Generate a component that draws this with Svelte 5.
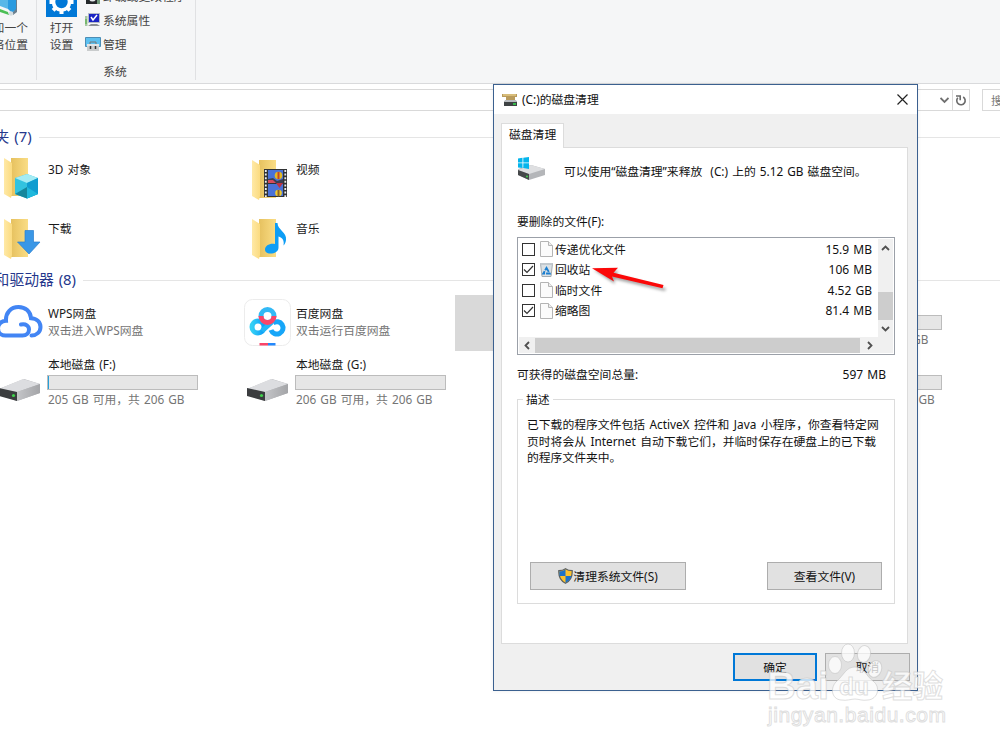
<script lang="ts">
  type Tile = {
    icon?: string;
    name?: string;
    sub?: string;
    fill?: number;
    bar?: boolean;
    selected?: boolean;
  };

  const folders: Tile[] = [
    { icon: 'cube', name: '3D 对象' },
    { icon: 'video', name: '视频' },
    { icon: 'download', name: '下载' },
    { icon: 'music', name: '音乐' }
  ];

  const drives: Tile[] = [
    { icon: 'wps', name: 'WPS网盘', sub: '双击进入WPS网盘' },
    { icon: 'baidu', name: '百度网盘', sub: '双击运行百度网盘' },
    { selected: true },
    { bar: true, fill: 0, sub: '107 GB 可用，共 118 GB' },
    { icon: 'drive', bar: true, fill: 1, name: '本地磁盘 (F:)', sub: '205 GB 可用，共 206 GB' },
    { icon: 'drive', bar: true, fill: 0, name: '本地磁盘 (G:)', sub: '206 GB 可用，共 206 GB' },
    {},
    { bar: true, fill: 0, sub: '95.8 GB 可用，共 99.9 GB' }
  ];

  const files = [
    { label: '传递优化文件', size: '15.9 MB', checked: false },
    { label: '回收站', size: '106 MB', checked: true, bin: true },
    { label: '临时文件', size: '4.52 GB', checked: false },
    { label: '缩略图', size: '81.4 MB', checked: true }
  ];
</script>

{#snippet folder()}
  <path d="M11 1h17v38H11z" fill="url(#folderBack)" />
  <path d="M4 1l8 5v31l-1 4-7-4z" fill="url(#folderFront)" />
{/snippet}

{#snippet drive()}
  <path d="M0 22L25 12l16 5v9L18 34 0 28z" fill="#b3b4b7" />
  <path d="M0 22L24 12l17 5-23 8z" fill="#dcdde0" />
  <path d="M0 21l18 4v9L0 29z" fill="#3b3d3f" />
  <path d="M18 25l23-8v9l-23 8z" fill="url(#driveSide)" />
  <circle cx="14.5" cy="28.5" r="1.6" fill="#3fd24b" />
{/snippet}

<svg class="defs" width="0" height="0">
  <defs>
    <linearGradient id="folderBack" x1="0" x2="1">
      <stop offset="0" stop-color="#e6c15f" />
      <stop offset="1" stop-color="#fadd85" />
    </linearGradient>
    <linearGradient id="folderFront" x1="0" x2="1">
      <stop offset="0" stop-color="#ffe9a6" />
      <stop offset="1" stop-color="#fbdb80" />
    </linearGradient>
    <linearGradient id="driveSide" x1="0" x2="1">
      <stop offset="0" stop-color="#c4c5c8" />
      <stop offset="1" stop-color="#a4a5a8" />
    </linearGradient>
    <linearGradient id="cloudBlue" x1="0" x2="1">
      <stop offset="0" stop-color="#35d0f5" />
      <stop offset="1" stop-color="#0a9cf8" />
    </linearGradient>
  </defs>
</svg>

<div class="screen">
  <div class="ribbon">
    <div class="ribbon-group location">
      <svg width="30" height="19" viewBox="0 0 30 19">
        <path d="M0 0h8v9L0 6z" fill="#58b7e8" />
        <path d="M8 0l8-1v11l-4 3-4-4z" fill="#2a9be0" />
        <path d="M16 0h1v12l-4 3v-3l3-3z" fill="#6b7f8e" />
        <path d="M0 9l8 3 1 3-9-3z" fill="#4bbf55" />
        <circle cx="11" cy="13.500" r="2.200" fill="#d5dde0" />
      </svg>
      <span>添加一个</span>
      <span>网络位置</span>
    </div>
    <div class="ribbon-group system">
      <div class="ribbon-cols">
        <div class="settings">
          <svg width="31" height="17" viewBox="0 0 31 17">
            <path d="M0 0h31v17H0z" fill="#0078d7" />
            <circle cx="15.500" cy="2" r="8" fill="none" stroke="#fff" stroke-width="3.600" />
            <path d="M15.500 10v4M9.800 7.700l-2.700 2.700M21.200 7.700l2.700 2.700M7.500 2h-4M23.500 2h4" stroke="#fff" stroke-width="4" />
          </svg>
          <span>打开</span>
          <span>设置</span>
        </div>
        <div class="commands">
          <div class="command">
            <svg width="16" height="16" viewBox="0 0 16 16">
              <path d="M1 3h13v13H1z" fill="#25292b" />
              <circle cx="7.500" cy="10" r="3.500" fill="#e8ecee" />
              <path d="M12 12l3-4v8h-3z" fill="#739b7b" />
            </svg>
            <span>卸载或更改程序</span>
          </div>
          <div class="command">
            <svg width="16" height="16" viewBox="0 0 16 16">
              <path d="M0 4h2.500v10H0z" fill="#a6c7a2" />
              <path d="M1 7v5" stroke="#49a83d" />
              <path d="M3.500 1.500h11v9h-11z" fill="#1a24c4" stroke="#b3bac6" />
              <path d="M6 5l2 3 4-5" fill="none" stroke="#fff" stroke-width="1.500" />
              <path d="M6 12h6l3 2H3z" fill="#8a8f93" />
            </svg>
            <span>系统属性</span>
          </div>
          <div class="command">
            <svg width="16" height="16" viewBox="0 0 16 16">
              <path d="M.5 1.500h15v9H.5z" fill="#5bc0f0" stroke="#4c8db5" />
              <path d="M5 8V6h6v2" fill="none" stroke="#777" />
              <path d="M2 8h12v7H2z" fill="#c9cccd" />
              <path d="M2 8h12v2H2z" fill="#e2e4e5" />
              <path d="M5.500 10v3M10.500 10v3" stroke="#333" stroke-width="1.500" />
            </svg>
            <span>管理</span>
          </div>
        </div>
      </div>
      <div class="group-label">系统</div>
    </div>
  </div>

  <div class="address-row">
    <div class="address">
      <div class="history">
        <svg width="9" height="7" viewBox="0 0 9 7"><path d="M.5 1l4 4 4-4" fill="none" stroke="#707070" stroke-width="1.800" /></svg>
      </div>
      <div class="refresh">
        <svg width="12" height="13" viewBox="0 0 12 13">
          <path d="M8.200 3a4.200 4.200 0 1 1-5.400.8" fill="none" stroke="#6a6a6a" stroke-width="1.600" />
          <path d="M1 2h4.200v4.200" fill="none" stroke="#6a6a6a" stroke-width="1.600" />
        </svg>
      </div>
    </div>
    <div class="search">搜索</div>
  </div>

  <div class="section-title first"><span>文件夹 (7)</span></div>
  <div class="tiles folders">
    {#each folders as tile}
      <div class="tile">
        <div class="tile-icon">
          <svg class:low={tile.icon !== 'cube'} width="45" height="45" viewBox="0 0 45 45">
            {@render folder()}
            {#if tile.icon === 'cube'}
              <path d="M15 21l12-4 11 4v16l-11 4.500L15 37z" fill="#32c3df" />
              <path d="M15 21l12-4 11 4-11 5z" fill="#a5ecf4" />
              <path d="M27 26l11-5v16l-11 4.500z" fill="#0f9cd0" />
              <path d="M15 37l12-7v11.500z" fill="#15869c" />
              <path d="M27 30l11 7-11 4.500z" fill="#1fb8dc" />
            {:else if tile.icon === 'video'}
              <path d="M16 10h23v28H16z" fill="#303234" />
              <path d="M20 11h15v13H20zM20 25h15v12H20z" fill="#4a72d8" />
              <path d="M20 20l5-1 4 3 6-2v4H20z" fill="#3a3f52" />
              <path d="M20 21h5l3 3h-8z" fill="#d64b5c" />
              <circle cx="30.500" cy="16.500" r="3.800" fill="#e4ba23" />
              <path d="M29.500 13h2v7h-2z" fill="#c4422a" />
              <path d="M28 24h7l-3.500 5z" fill="#bd3344" />
              <circle cx="30.500" cy="34" r="3.300" fill="#efcb2e" />
              <path d="M29.500 31h2v6h-2z" fill="#8b632b" />
              <path d="M17.800 11v27M37.300 11v27" stroke="#eee" stroke-width="1.800" stroke-dasharray="2 1.600" />
            {:else if tile.icon === 'download'}
              <path d="M25 12.500h8.500V24H40L29 36 17.500 24H25z" fill="#3a97e6" stroke="#2a7fd0" stroke-width=".7" />
            {:else}
              <path d="M27 5h2.500c0 7 9.500 9 8.500 17-.3 3-1.600 4.500-2.500 5.500 1-5-1-8-5-9v11c0 4-4 6-8 6s-5.500-1.800-5.500-4c0-4 5-6.500 10-5.500z" fill="#0d9df5" />
            {/if}
          </svg>
        </div>
        <div class="tile-text"><span class="name">{tile.name}</span></div>
      </div>
    {/each}
  </div>

  <div class="section-title second"><span>设备和驱动器 (8)</span></div>
  <div class="tiles drives">
    {#each drives as tile}
      <div class="tile" class:selected={tile.selected} class:with-bar={tile.bar}>
        <div class="tile-icon">
          {#if tile.icon === 'wps'}
            <svg class="wide" width="48" height="46" viewBox="0 0 48 46">
              <path d="M25 25.500c5-1 8 1.500 8 5 0 3.500-2.600 6-6.500 6H9.500C4.500 36.500 2 33 2 29.200c0-4 3.500-7.500 8-7.500C9.500 13.500 15 8 22.500 8c7 0 12 4.500 12.500 11.200 6 .3 9.500 4 9.500 8.800 0 5-4 8.500-9 8.500" fill="none" stroke="#4285f4" stroke-width="4" stroke-linecap="round" />
            </svg>
          {:else if tile.icon === 'baidu'}
            <svg class="wide" width="48" height="48" viewBox="0 0 48 48">
              <rect x=".5" y=".5" width="46" height="46" rx="8" fill="#fff" stroke="#ececec" />
              <g fill="none" stroke-width="5">
                <circle cx="14" cy="28" r="6" stroke="url(#cloudBlue)" />
                <path d="M27 31a6.200 6.200 0 1 0 2-7" stroke="#17a6f8" />
                <path d="M18 32l10-9" stroke="#22b6f7" />
                <circle cx="23.500" cy="17" r="6.500" stroke="#32b9f6" />
                <path d="M17 17a6.500 6.500 0 0 0 13 0" stroke="#fa4468" />
              </g>
              <path d="M15.500 44H24v2.500h-8.500z" fill="#fa4468" />
              <path d="M24 44h7.500v2.500H24z" fill="#2488fb" />
            </svg>
          {:else if tile.icon === 'drive'}
            <svg class="disk" width="42" height="40" viewBox="0 0 42 40">{@render drive()}</svg>
          {/if}
        </div>
        <div class="tile-text">
          {#if tile.name}<span class="name">{tile.name}</span>{/if}
          {#if tile.bar}<div class="bar" class:unnamed={!tile.name}><div style="width: {tile.fill}%"></div></div>{/if}
          {#if tile.sub}<span class="sub">{tile.sub}</span>{/if}
        </div>
      </div>
    {/each}
  </div>

  <div class="dialog">
    <div class="titlebar">
      <svg width="17" height="14" viewBox="0 0 17 14">
        <path d="M0 1h15v3h-2v4H4V4H0z" fill="#b99b5c" />
        <path d="M1 1h13v2H1z" fill="#d8bd7a" />
        <path d="M3 8h11l1 1v4H2V9z" fill="#3e4244" />
        <path d="M3 7h11l1 2H2z" fill="#b9bcc0" />
        <path d="M11 10h3v2h-3z" fill="#37ba4c" />
      </svg>
      <span class="title">(C:)的磁盘清理</span>
      <svg class="close" width="11" height="11" viewBox="0 0 11 11"><path d="M.5.5l10 10M10.500.5l-10 10" stroke="#222" stroke-width="1.200" /></svg>
    </div>

    <div class="tab">磁盘清理</div>
    <div class="page">
      <div class="intro">
        <svg width="30" height="24" viewBox="0 0 30 24">
          <path d="M1 12l13-4 14 4v6l-16 5-11-5z" fill="#b4b6b9" />
          <path d="M1 13l13-5 14 4-16 5z" fill="#dedfe1" />
          <path d="M1 13l11 4v6L1 18z" fill="#45484a" />
          <circle cx="10" cy="19.500" r="1" fill="#3fd24b" />
          <path d="M1 1.500l4.500-.7v4.700H1zM6.300.7L12 0v5.500H6.300zM1 6.300h4.500V11L1 10.500zM6.300 6.300H12V12l-5.700-.9z" fill="#05b5ec" />
        </svg>
        <span>可以使用“磁盘清理”来释放&nbsp; (C:) 上的 5.12 GB 磁盘空间。</span>
      </div>

      <div class="list-label">要删除的文件(F):</div>
      <div class="listbox">
        <div class="list-main">
          <div class="rows">
            {#each files as file}
              <div class="row">
                <span class="check">
                  {#if file.checked}
                    <svg width="11" height="11" viewBox="0 0 11 11"><path d="M1 5.500l3 3L10 2" fill="none" stroke="#333" stroke-width="1.200" /></svg>
                  {/if}
                </span>
                {#if file.bin}
                  <svg width="13" height="16" viewBox="0 0 13 16">
                    <path d="M.5 1.500h12l-1.500 13H2z" fill="#dbe1e5" stroke="#a5adb2" />
                    <path d="M.5 1h12v2H.5z" fill="#c2c9ce" />
                    <path d="M6.500 6l3.200 5.500H3.300z" fill="none" stroke="#1c7fd0" stroke-width="1.900" stroke-dasharray="4.500 1" />
                  </svg>
                {:else}
                  <svg width="13" height="16" viewBox="0 0 13 16">
                    <path d="M.5.5h8l4 4v11H.5z" fill="#fbfbfb" stroke="#b4b4b4" />
                    <path d="M8.500.5v4h4" fill="#eee" stroke="#b4b4b4" />
                  </svg>
                {/if}
                <span class="label">{file.label}</span>
                <span class="size">{file.size}</span>
              </div>
            {/each}
          </div>
          <div class="vscroll">
            <svg width="9" height="6" viewBox="0 0 9 6"><path d="M1 5l3.500-3.500L8 5" fill="none" stroke="#505050" stroke-width="1.800" /></svg>
            <div class="vthumb"></div>
            <svg width="9" height="6" viewBox="0 0 9 6"><path d="M1 1l3.500 3.500L8 1" fill="none" stroke="#505050" stroke-width="1.800" /></svg>
          </div>
        </div>
        <div class="hscroll">
          <svg width="6" height="9" viewBox="0 0 6 9"><path d="M5 1L1.500 4.500 5 8" fill="none" stroke="#505050" stroke-width="1.800" /></svg>
          <div class="hthumb"></div>
          <svg width="6" height="9" viewBox="0 0 6 9"><path d="M1 1l3.500 3.500L1 8" fill="none" stroke="#505050" stroke-width="1.800" /></svg>
        </div>
      </div>

      <div class="total"><span>可获得的磁盘空间总量:</span><span class="size">597 MB</span></div>

      <div class="group">
        <div class="legend">描述</div>
        <p>
          已下载的程序文件包括 ActiveX 控件和 Java 小程序，你查看特定网<br />页时将会从 Internet 自动下载它们，并临时保存在硬盘上的已下载<br />的程序文件夹中。
        </p>
        <div class="group-buttons">
          <button class="clean">
            <svg width="15" height="16" viewBox="0 0 15 16">
              <path d="M7.500.7c2 1.500 4.300 2 6.700 2 .3 6-1.200 10-6.700 12.600C2 12.700.5 8.700.8 2.700c2.400 0 4.700-.5 6.700-2z" fill="#fcc22d" stroke="#5c6063" stroke-width="1.200" />
              <path d="M7.500 1.500V8H1.600C1.300 6.500 1.300 5 1.400 3.300c2.200 0 4.200-.5 6.100-1.800zM7.500 8h5.900c-.7 3-2.600 5.200-5.900 6.700z" fill="#1d72c8" />
            </svg>
            清理系统文件(S)
          </button>
          <button class="view">查看文件(V)</button>
        </div>
      </div>
    </div>

    <div class="footer">
      <button class="ok">确定</button>
      <button class="cancel">取消</button>
    </div>
  </div>

  <svg class="arrow" width="88" height="40" viewBox="0 0 88 40">
    <path class="arrow-shadow" d="M11 8l25 1-4 3.500 51 14-1 2.500-51-12 1 5z" fill="#444" />
    <path d="M9 6.300l26-.6-4.500 5 50 12.300-1 3.200L29 14.500l2 5z" fill="#fb0808" />
  </svg>

  <svg class="watermark" width="200" height="100" viewBox="0 0 200 100">
    <g fill="#fff" fill-opacity=".75" stroke="#bdbdbd" stroke-opacity=".5">
      <text class="mark-latin" x="5" y="62" font-size="39" textLength="62" lengthAdjust="spacingAndGlyphs">Bai</text>
      <ellipse cx="73" cy="28" rx="6.500" ry="8.500" />
      <ellipse cx="86" cy="16" rx="6.500" ry="9" />
      <ellipse cx="102" cy="17" rx="6.500" ry="8.500" transform="rotate(12 102 17)" />
      <ellipse cx="113" cy="32" rx="6.500" ry="8.500" transform="rotate(20 113 32)" />
      <path d="M93 30c9 0 11 9 18 14 8 6 5 18-5 19-6 1-9-1-13-1s-8 2-14 1c-10-1-11-13-4-19 7-6 9-14 18-14z" />
      <text class="mark-latin" x="77" y="58" font-size="24" textLength="30" lengthAdjust="spacingAndGlyphs">du</text>
      <text class="mark-cjk" x="120" y="60" font-size="30.500">经验</text>
      <text class="mark-site" x="6" y="85" font-size="21" textLength="178">jingyan.baidu.com</text>
    </g>
  </svg>
</div>

<style>
  :global(body) {
    margin: 0;
    overflow: hidden;
  }

  .defs {
    position: absolute;
  }

  .screen {
    position: relative;
    width: 1000px;
    height: 750px;
    overflow: hidden;
    background: #fff;
    color: #1a1a1a;
    font-family: 'Noto Sans', 'Noto Sans CJK SC', sans-serif;
    font-size: 11.8px;
    line-height: 17px;
    word-spacing: 1px;
    white-space: nowrap;
  }

  svg {
    display: block;
    flex-shrink: 0;
  }

  /* explorer window */
  .ribbon {
    display: flex;
    height: 83px;
    background: #f5f6f7;
    border-bottom: 1px solid #d9dadc;
    color: #444;
  }

  .ribbon-group {
    box-sizing: border-box;
    height: 80px;
    border-right: 1px solid #e0e1e3;
  }

  .location {
    display: flex;
    flex-direction: column;
    align-items: flex-end;
    width: 37px;
    padding-right: 8px;
  }

  .location svg {
    align-self: flex-start;
  }

  .system {
    width: 159px;
  }

  .ribbon-cols {
    display: flex;
    height: 63px;
    padding-left: 9px;
  }

  .settings {
    display: flex;
    flex-direction: column;
    align-items: center;
    width: 31px;
  }

  .settings svg {
    margin-bottom: 2px;
  }

  .commands {
    margin: -16px 0 0 8px;
  }

  .command {
    display: flex;
    align-items: center;
    gap: 2px;
    height: 24px;
  }

  .group-label {
    padding-right: 2px;
    text-align: center;
  }

  .address-row {
    display: flex;
    gap: 12px;
    padding-top: 5px;
  }

  .address {
    display: flex;
    flex-shrink: 0;
    justify-content: flex-end;
    box-sizing: border-box;
    width: 970px;
    height: 22px;
    border: 1px solid #d9d9d9;
    border-left: 0;
  }

  .history,
  .refresh {
    display: flex;
    align-items: center;
    justify-content: center;
    width: 16px;
  }

  .refresh {
    border-left: 1px solid #d9d9d9;
  }

  .search {
    flex-shrink: 0;
    box-sizing: border-box;
    width: 100px;
    height: 22px;
    padding: 2px 8px;
    border: 1px solid #d9d9d9;
    color: #777;
  }

  .section-title {
    display: flex;
    align-items: center;
    height: 20px;
    color: #25378c;
    font-size: 14.8px;
    line-height: 20px;
  }

  .section-title span {
    margin-top: -2px;
  }

  .section-title::after {
    content: '';
    flex: 1;
    height: 1px;
    margin-left: 7px;
    background: #e5e5e5;
  }

  .first {
    margin: 16px 0 0 -35px;
  }

  .second {
    margin: 0 0 0 -35px;
  }

  .tiles {
    display: grid;
    grid-template-columns: repeat(4, 248px);
  }

  .folders {
    grid-template-columns: repeat(2, 248px);
    grid-auto-rows: 58.5px;
    height: 113px;
    padding-top: 10px;
  }

  .drives {
    grid-auto-rows: 60px;
    padding-top: 3px;
  }

  .tile {
    display: flex;
  }

  .tile-icon {
    flex-shrink: 0;
    width: 48px;
  }

  .low {
    margin-top: 2px;
  }

  .wide {
    margin: 6px 0 0 -4px;
  }

  .disk {
    margin: 14px 0 0 -1px;
  }

  .tile-text {
    display: flex;
    flex-direction: column;
    padding-top: 4px;
  }

  .drives .tile-text {
    padding-top: 12px;
  }

  .drives .with-bar .tile-text {
    padding-top: 3px;
  }

  .sub {
    color: #757575;
  }

  .bar {
    box-sizing: border-box;
    width: 151px;
    height: 15px;
    margin: 2px 0 1px -1px;
    border: 1px solid #bcbcbc;
    background: #e6e6e6;
  }

  .unnamed {
    margin-top: 19px;
  }

  .bar div {
    height: 13px;
    background: #26a0da;
  }

  .selected {
    width: 230px;
    height: 56px;
    margin: 2px 0 0 -41px;
    background: #d9d9d9;
  }

  /* cleanup dialog */
  .dialog {
    position: absolute;
    left: 493px;
    top: 84px;
    box-sizing: border-box;
    width: 425px;
    height: 607px;
    border: 1px solid #3b608f;
    background: #f0f0f0;
    box-shadow: 0 0 4px rgba(0, 0, 0, 0.08);
    color: #111;
  }

  .titlebar {
    display: flex;
    align-items: center;
    height: 29px;
    padding: 0 9px 0 8px;
    background: #fff;
  }

  .title {
    flex: 1;
    margin-left: 3px;
  }

  .tab {
    position: relative;
    box-sizing: border-box;
    width: 63px;
    height: 25px;
    margin: 9px 0 -1px 7px;
    padding: 2px 7px;
    border: 1px solid #dcdcdc;
    border-bottom: 0;
    background: #fff;
  }

  .page {
    box-sizing: border-box;
    width: 407px;
    height: 497px;
    margin-left: 7px;
    padding: 9px 13px 0 15px;
    border: 1px solid #dcdcdc;
    background: #fff;
  }

  .intro {
    display: flex;
    height: 56px;
  }

  .intro span {
    margin: 6px 0 0 17px;
  }

  .list-label {
    height: 24px;
  }

  .listbox {
    display: flex;
    flex-direction: column;
    box-sizing: border-box;
    width: 378px;
    height: 118px;
    padding: 1px;
    border: 1px solid #9ba0a8;
  }

  .list-main {
    display: flex;
    height: 98px;
  }

  .rows {
    flex: 1;
    padding: 0 6px 0 3px;
  }

  .row {
    display: flex;
    align-items: center;
    height: 20.5px;
  }

  .check {
    box-sizing: border-box;
    width: 13px;
    height: 13px;
    margin-right: 5px;
    border: 1px solid #333;
  }

  .label {
    flex: 1;
    margin-left: 2px;
  }

  .size {
    font-size: 12px;
  }

  .vscroll {
    display: flex;
    flex-direction: column;
    align-items: center;
    box-sizing: border-box;
    width: 15px;
    padding: 6px 0 5px;
    background: #f0f0f0;
  }

  .vthumb {
    width: 15px;
    height: 28px;
    margin: auto 0 6px;
    background: #cdcdcd;
  }

  .hscroll {
    display: flex;
    align-items: center;
    height: 16px;
    padding: 0 20px 0 5px;
    background: #f0f0f0;
  }

  .hthumb {
    flex: 1;
    height: 15px;
    margin: 0 7px 0 5px;
    background: #cdcdcd;
  }

  .total {
    display: flex;
    justify-content: space-between;
    padding: 11px 8px 0 0;
  }

  .group {
    box-sizing: border-box;
    width: 378px;
    height: 205px;
    margin-top: 16px;
    padding: 0 10px 0 9px;
    border: 1px solid #dcdcdc;
  }

  .legend {
    width: fit-content;
    height: 17px;
    margin: -9px 0 0 -4px;
    padding: 0 3px;
    background: #fff;
  }

  p {
    height: 137px;
    margin: 0;
    padding-top: 8px;
    line-height: 16.7px;
    word-spacing: 1.4px;
  }

  .group-buttons {
    display: flex;
    justify-content: space-between;
    padding: 9px 2px 0 3px;
  }

  button {
    display: flex;
    align-items: center;
    justify-content: center;
    box-sizing: border-box;
    height: 28px;
    padding: 0;
    border: 1px solid #adadad;
    background: #e1e1e1;
    color: #111;
    font: inherit;
  }

  .clean {
    width: 156px;
  }

  .view {
    width: 115px;
  }

  .footer {
    display: flex;
    justify-content: flex-end;
    gap: 8px;
    padding: 9px 7px 0 0;
  }

  .ok,
  .cancel {
    width: 85px;
  }

  .ok {
    width: 84px;
    border: 2px solid #0078d7;
  }

  .arrow {
    position: absolute;
    left: 583px;
    top: 262px;
  }

  .arrow-shadow {
    opacity: 0.5;
    filter: blur(1.5px);
  }

  .watermark {
    position: absolute;
    left: 762px;
    top: 637px;
  }

  .mark-latin,
  .mark-site {
    font-family: 'Liberation Sans', sans-serif;
    font-weight: 700;
  }

  .mark-site {
    font-weight: 400;
  }

  .mark-cjk {
    font-family: 'Noto Sans CJK SC', sans-serif;
    font-weight: 700;
  }
</style>
